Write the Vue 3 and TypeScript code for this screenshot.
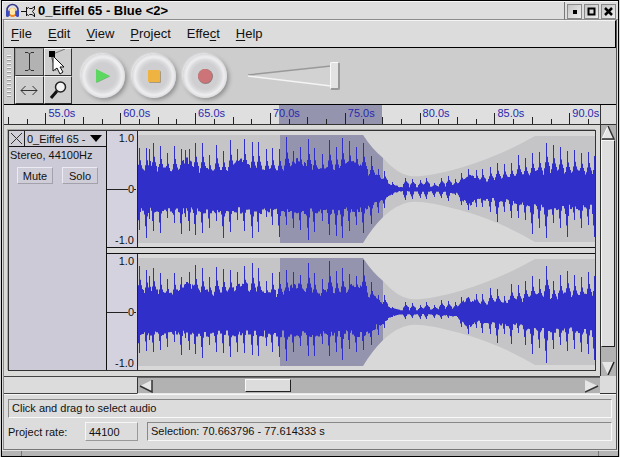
<script setup lang="ts">
import { ref } from 'vue'

type Beat = [x: number, top1: number, bottom1: number, top2: number, bottom2: number]

interface Column {
  top: number
  bottom: number
}

const menus = [
  { before: '', key: 'F', after: 'ile' },
  { before: '', key: 'E', after: 'dit' },
  { before: '', key: 'V', after: 'iew' },
  { before: '', key: 'P', after: 'roject' },
  { before: 'Effe', key: 'c', after: 't' },
  { before: '', key: 'H', after: 'elp' },
]

const rate = ref('44100')
const volume = ref(100)

// Ruler: one grid column for each tick, a label at every fourth one.
const ticks = Array.from({ length: 32 }, (_, i) => ({
  id: i,
  kind: i % 4 === 2 ? 'major' : i % 4 === 0 ? 'half' : 'minor',
}))
const labels = Array.from({ length: 8 }, (_, i) => ({
  text: `${55 + i * 5}.0s`,
  column: `${3 + i * 4} / span ${i === 7 ? 2 : 4}`,
}))
const selection = { left: (275 / 596) * 100, width: (103 / 596) * 100 }

// Peaks of each beat, in units above and below the zero line of both channels.
const beats: Beat[] = [
  [1, 41, 41, 46, 41], [8, 41, 49, 42, 39], [11, 40, 30, 36, 28], [15, 46, 42, 44, 40],
  [22, 43, 44, 39, 38], [29, 36, 29, 33, 35], [36, 43, 34, 39, 30], [43, 40, 45, 35, 43],
  [47, 39, 28, 28, 26], [51, 40, 42, 40, 38], [57, 46, 46, 47, 42], [64, 46, 44, 44, 46],
  [71, 34, 39, 35, 33], [78, 44, 32, 45, 40], [85, 38, 49, 43, 41], [92, 49, 43, 42, 45],
  [99, 40, 31, 40, 40], [106, 50, 42, 46, 41], [114, 47, 49, 49, 43], [120, 47, 43, 44, 44],
  [128, 40, 28, 31, 34], [134, 41, 36, 39, 40], [141, 40, 48, 40, 45], [148, 52, 36, 42, 49],
  [155, 38, 39, 40, 40], [162, 42, 41, 37, 34], [170, 50, 51, 49, 44], [176, 41, 43, 39, 44],
  [184, 35, 32, 33, 32], [191, 49, 46, 51, 44], [198, 42, 47, 41, 40], [204, 51, 49, 44, 48],
  [211, 48, 42, 38, 37], [218, 42, 36, 36, 40], [225, 46, 44, 52, 38], [233, 33, 35, 30, 33],
  [240, 20, 24, 17, 23], [246, 18, 19, 17, 16], [254, 7, 6, 5, 5], [267, 11, 11, 10, 7],
  [274, 10, 10, 9, 6], [282, 9, 9, 7, 7], [288, 11, 10, 10, 7], [296, 6, 8, 7, 6],
  [303, 11, 9, 12, 7], [310, 13, 12, 11, 6], [317, 10, 6, 10, 4], [323, 16, 16, 15, 15],
  [330, 20, 21, 15, 22], [338, 19, 18, 18, 16], [344, 20, 18, 18, 21], [352, 22, 23, 24, 22],
  [359, 26, 33, 23, 31], [366, 25, 23, 16, 22], [373, 26, 29, 28, 32], [380, 34, 29, 27, 21],
  [387, 31, 31, 31, 33], [394, 36, 45, 36, 42], [401, 37, 39, 33, 36], [408, 46, 49, 46, 51],
  [415, 44, 34, 31, 37], [422, 42, 39, 37, 33], [429, 38, 48, 41, 39], [436, 39, 31, 37, 37],
  [443, 36, 39, 35, 40], [450, 37, 36, 40, 42], [456, 33, 48, 36, 48],
]

const gainPoints: [number, number][] = [
  [0, 1], [225, 1], [233, 0.8], [240, 0.62], [246, 0.42], [254, 0.2], [262, 0.1], [300, 0.12],
  [318, 0.2], [324, 0.5], [330, 0.72], [340, 0.45], [355, 0.5], [385, 0.65], [400, 0.85], [457, 0.85],
]

// How much of a beat's peak the columns beside it reach.
const topShape: Record<number, number> = { [-2]: 0.45, [-1]: 0.58, 0: 1, 1: 0.7, 2: 0.58, 3: 0.5 }
const bottomShape: Record<number, number> = { [-2]: 0.52, [-1]: 0.76, 0: 1, 1: 0.56 }

function gain(x: number): number {
  for (let i = 1; i < gainPoints.length; i++) {
    const [x0, g0] = gainPoints[i - 1]
    const [x1, g1] = gainPoints[i]
    if (x <= x1) return g0 + ((g1 - g0) * (x - x0)) / (x1 - x0)
  }
  return 1
}

function noise(n: number): number {
  const v = Math.sin(n * 127.1 + 11.7) * 43758.5453
  return v - Math.floor(v)
}

function columns(channel: number): Column[] {
  return Array.from({ length: 457 }, (_, x) => {
    const g = gain(x)
    const swell = x < 240 ? 9 * Math.max(0, Math.sin((x - 34) / 8.9)) ** 2 : 0
    const seed = Math.floor(x / 2) + channel * 600
    let top = g * (15 + swell + 8 * noise(seed))
    let bottom = g * (18 + 7 * noise(seed + 2000))
    for (const beat of beats) {
      const d = x - beat[0]
      top = Math.max(top, beat[1 + channel * 2] * (topShape[d] ?? 0))
      bottom = Math.max(bottom, beat[2 + channel * 2] * (bottomShape[d] ?? 0))
    }
    return { top, bottom }
  })
}

function wavePath(channel: number): string {
  const cols = columns(channel)
  const upper = cols.map((c, x) => `V${(54 - c.top).toFixed(1)}H${x + 1}`).join('')
  const lower = cols
    .map((c, x) => `V${(54 + c.bottom).toFixed(1)}H${x}`)
    .reverse()
    .join('')
  return `M0 54H0${upper}V54${lower}Z`
}

const channels = [
  { id: 'left', path: wavePath(0) },
  { id: 'right', path: wavePath(1) },
]

const envelope =
  'M0 0H225Q234 14 245 23Q259 39 272 41Q286 43 322 33Q362 21 397 1H457V107H397Q362 86 322 75Q286 65 272 67Q259 69 245 82Q234 93 225 108H0Z'
</script>

<template>
  <div class="window">
    <header class="titlebar">
      <svg class="logo" width="15" height="15" viewBox="0 0 15 15" aria-hidden="true">
        <ellipse cx="7.500" cy="9.500" rx="4" ry="4.500" fill="#f08a1c" />
        <ellipse cx="7.500" cy="8.500" rx="3" ry="3.500" fill="#ffe9a8" />
        <path d="M2 9V7a5.500 5.500 0 0 1 11 0v2" fill="none" stroke="#34348a" stroke-width="1.500" />
        <rect x="1" y="7" width="3" height="7" rx="1.500" fill="#3a4bc0" />
        <rect x="11" y="7" width="3" height="7" rx="1.500" fill="#3a4bc0" />
        <path d="M4.500 8v5M10.500 8v5" stroke="#e0481c" />
      </svg>
      <svg class="pin" width="15" height="12" viewBox="0 0 15 12" aria-hidden="true">
        <path d="M0 6.500h5M5.500 2v9M5.500 4l2-1.500 1 1h2.500l2.500-2M5.500 9l2 1.500 1-1h2.500l2.500 2M13.500 1v3l-2 2.500 2 2.500v3" fill="none" stroke="#111" />
      </svg>
      <h1>0_Eiffel 65 - Blue &lt;2&gt;</h1>
      <div class="winbuttons">
        <button type="button" aria-label="Minimize">
          <svg width="11" height="11" viewBox="0 0 11 11"><rect x="4" y="4" width="4" height="4" /></svg>
        </button>
        <button type="button" aria-label="Maximize">
          <svg width="11" height="11" viewBox="0 0 11 11"><rect x="2.500" y="2.500" width="6" height="6" fill="none" stroke="#000" stroke-width="2" /></svg>
        </button>
        <button type="button" aria-label="Close">
          <svg width="11" height="11" viewBox="0 0 11 11"><path d="M2 2l7 7M9 2l-7 7" stroke="#000" stroke-width="2.500" /></svg>
        </button>
      </div>
    </header>

    <div class="client">
      <nav class="menubar">
        <button v-for="m in menus" :key="m.key" type="button">{{ m.before }}<u>{{ m.key }}</u>{{ m.after }}</button>
      </nav>

      <section class="toolbar">
        <div class="grip"></div>
        <div class="tools">
          <button type="button" class="on" aria-label="Selection tool">
            <svg width="26" height="26" viewBox="0 0 26 26"><path d="M9 3.500h3l1.500 1.500L15 3.500h3M13.500 5v15M9 21.500h3l1.500-1.500 1.500 1.500h3" fill="none" stroke="#333" /></svg>
          </button>
          <button type="button" aria-label="Envelope tool">
            <svg width="26" height="26" viewBox="0 0 26 26">
              <path d="M8 5L20 0M6 7l5 15" stroke="#777" />
              <rect x="4" y="2" width="6" height="6" />
              <path d="M8 7v15l4-3 3 6 3-2-3-5h4z" fill="#fff" stroke="#111" />
            </svg>
          </button>
          <button type="button" aria-label="Time shift tool">
            <svg width="26" height="26" viewBox="0 0 26 26"><path d="M5 13.500h16M9.500 9L5 13.500 9.500 18M16.500 9l4.500 4.500-4.500 4.500" fill="none" stroke="#333" /></svg>
          </button>
          <button type="button" aria-label="Zoom tool">
            <svg width="26" height="26" viewBox="0 0 26 26">
              <path d="M12 14l-6 7" stroke="#111" stroke-width="3" />
              <circle cx="15.500" cy="10" r="5" fill="#f4f4f4" stroke="#222" stroke-width="1.500" />
            </svg>
          </button>
        </div>
        <div class="transport">
          <button type="button" aria-label="Play">
            <svg width="16" height="16" viewBox="0 0 16 16"><path d="M1.500 2L15 8.500 1.500 15z" fill="#8a9a8c" /><path d="M1 1l14 7L1 14.500z" fill="#5cd860" /></svg>
          </button>
          <button type="button" aria-label="Stop">
            <svg width="16" height="16" viewBox="0 0 16 16"><rect x="3" y="3" width="12" height="12" rx="1" fill="#a89a80" /><rect x="2" y="2" width="12" height="12" rx="1" fill="#efb342" /></svg>
          </button>
          <button type="button" aria-label="Record">
            <svg width="16" height="16" viewBox="0 0 16 16"><circle cx="8.500" cy="8.500" r="7.500" fill="#93787a" /><circle cx="8" cy="8" r="7" fill="#cc7478" /></svg>
          </button>
        </div>
        <label class="volume">
          <svg width="94" height="32" viewBox="0 0 94 32" aria-hidden="true">
            <path d="M2 15.500L85 6V26z" fill="#d2d2d2" />
            <path d="M2 15L85 6" stroke="#999" stroke-width="1.500" />
            <path d="M2 16L85 26" stroke="#f4f4f4" stroke-width="1.500" />
          </svg>
          <input v-model="volume" type="range" min="0" max="100" aria-label="Volume" />
        </label>
      </section>

      <section class="workspace">
        <div class="ruler">
          <div class="ruler-selection" :style="{ left: selection.left + '%', width: selection.width + '%' }"></div>
          <span v-for="l in labels" :key="l.text" class="label" :style="{ gridColumn: l.column }">{{ l.text }}</span>
          <i v-for="t in ticks" :key="t.id" :class="['tick', t.kind]"></i>
        </div>
        <div class="ruler-end"></div>

        <div class="tracks">
          <article class="track">
            <aside class="panel">
              <div class="track-head">
                <button type="button" class="close" aria-label="Remove track">
                  <svg width="15" height="15" viewBox="0 0 15 15"><path d="M2 2l11 11M13 2L2 13" stroke="#333" /></svg>
                </button>
                <button type="button" class="name">
                  <span>0_Eiffel 65 -</span>
                  <svg width="12" height="7" viewBox="0 0 12 7" aria-hidden="true"><path d="M0 0h12L6 7z" /></svg>
                </button>
              </div>
              <p>Stereo, 44100Hz</p>
              <div class="switches">
                <button type="button">Mute</button>
                <button type="button">Solo</button>
              </div>
            </aside>
            <div class="channels">
              <div v-for="c in channels" :key="c.id" class="channel">
                <div class="scale">
                  <span>1.0</span>
                  <span class="zero">0</span>
                  <span>-1.0</span>
                </div>
                <div class="wave">
                  <svg viewBox="0 0 457 108" preserveAspectRatio="none" role="img" aria-label="Waveform">
                    <defs>
                      <clipPath :id="'env-' + c.id"><path :d="envelope" /></clipPath>
                    </defs>
                    <path :d="envelope" fill="#c5c4c6" />
                    <rect x="142" y="0" width="103" height="108" fill="#9494ae" :clip-path="`url(#env-${c.id})`" />
                    <path :d="c.path" fill="#302fca" />
                  </svg>
                </div>
              </div>
            </div>
          </article>
        </div>

        <div class="vscroll">
          <button type="button" aria-label="Scroll up">
            <svg width="14" height="14" viewBox="0 0 14 14"><path d="M7 0L13 13H1z" fill="#e6e6e6" /><path d="M7 0L1 13" stroke="#fff" /><path d="M7 0l6 13H1" fill="none" stroke="#333" stroke-width="1.500" /></svg>
          </button>
          <div class="vthumb"></div>
          <div class="vtrough"></div>
          <button type="button" aria-label="Scroll down">
            <svg width="14" height="14" viewBox="0 0 14 14"><path d="M1 1h12L7 14z" fill="#e6e6e6" /><path d="M13 1L7 14" stroke="#222" stroke-width="1.500" /></svg>
          </button>
        </div>

        <div class="hscroll-row">
          <div class="hblank"></div>
          <div class="hscroll">
            <button type="button" aria-label="Scroll left">
              <svg width="14" height="14" viewBox="0 0 14 14"><path d="M13 1v12L1 7z" fill="#e6e6e6" /><path d="M1 7l12 6V1" fill="none" stroke="#333" stroke-width="1.500" /></svg>
            </button>
            <div class="before"></div>
            <div class="hthumb"></div>
            <div class="after"></div>
            <button type="button" aria-label="Scroll right">
              <svg width="14" height="14" viewBox="0 0 14 14"><path d="M0 1v12l13-6z" fill="#e6e6e6" /><path d="M0 13l13-6" stroke="#333" stroke-width="1.500" /></svg>
            </button>
          </div>
        </div>
        <div class="corner"></div>
      </section>

      <footer class="status">
        <div class="sunken">Click and drag to select audio</div>
        <div class="status-row">
          <label for="rate">Project rate:</label>
          <input id="rate" v-model="rate" type="text" />
          <div class="sunken">Selection: 70.663796 - 77.614333 s</div>
        </div>
      </footer>
    </div>
    <div class="handle"><i></i></div>
  </div>
</template>

<style>
body {
  background: #d4d4d4;
}
</style>

<style scoped>
* {
  box-sizing: border-box;
}

button,
input {
  margin: 0;
  padding: 0;
  border: 0;
  border-radius: 0;
  background: none;
  color: inherit;
  font: inherit;
}

svg {
  display: block;
}

.window {
  display: flex;
  flex-direction: column;
  min-height: 100vh;
  margin: 0 1px;
  border: 1px solid #000;
  background: #dcdcdc;
  color: #111;
  font: 11px/14px 'Liberation Sans', Arial, sans-serif;
}

.titlebar {
  display: flex;
  align-items: center;
  height: 19px;
  padding-left: 2px;
  border-top: 1px solid #f6f6f6;
  border-left: 1px solid #f0f0f0;
  border-bottom: 1px solid #8c8c8c;
  background: #dedede;
}

.pin {
  margin: 0 2px 0 1px;
}

h1 {
  flex: 1;
  margin: 0;
  color: #000;
  font-size: 13px;
  font-weight: bold;
  line-height: 16px;
}

.winbuttons {
  display: flex;
  gap: 2px;
  height: 18px;
  padding: 2px 2px 1px;
  border-left: 1px solid #777;
}

.winbuttons button {
  width: 15px;
  height: 15px;
  padding: 1px;
  border: 1px solid #8a8a8a;
  background: linear-gradient(135deg, #c4c4c4, #f0f0f0);
}

.client {
  display: flex;
  flex: 1;
  flex-direction: column;
  margin: 0 1px;
  border-right: 1px solid #555;
  border-left: 1px solid #8c8c8c;
  border-bottom: 1px solid #777;
}

.menubar {
  display: flex;
  gap: 16px;
  height: 28px;
  padding: 0 7px;
  border-top: 1px solid #f4f4f4;
  border-right: 1px solid #000;
  border-bottom: 1px solid #000;
  background: #dcdcdc;
  font-size: 13px;
  line-height: 24px;
}

.menubar u {
  text-underline-offset: 2px;
}

.toolbar {
  display: flex;
  height: 57px;
  border-bottom: 1px solid #000;
  background: #cdcdcd;
}

.grip {
  width: 4px;
  margin: 7px 3px 7px 3px;
  background: repeating-linear-gradient(#f4f4f4 0 1px, #9a9a9a 1px 2px, #cdcdcd 2px 4px);
}

.tools {
  display: grid;
  grid-template-columns: 29px 28px;
  grid-template-rows: 28px 28px;
  border-left: 1px solid #333;
}

.tools button {
  border-top: 1px solid #f2f2f2;
  border-left: 1px solid #f2f2f2;
  border-right: 1px solid #333;
  border-bottom: 1px solid #333;
  background: #cecece;
}

.tools .on {
  border-top-color: #999;
  border-left-color: #999;
  background: #b2b2b2;
}

.transport {
  display: flex;
  align-items: center;
  gap: 7px;
  margin-left: 9px;
}

.transport button {
  display: grid;
  place-items: center;
  width: 44px;
  height: 44px;
  border-radius: 50%;
  background: radial-gradient(circle, #cfcfd1 0 13px, #dadadc 16px, #eeeef0 19px, #dcdcde 22px);
  box-shadow: -1px -1px 2px #ececee, 2px 2px 4px #8e8e90;
}

.volume {
  display: grid;
  align-items: center;
  margin-left: 19px;
}

.volume > * {
  grid-area: 1 / 1;
}

.volume input {
  width: 94px;
  height: 28px;
  appearance: none;
}

.volume input::-webkit-slider-thumb {
  width: 10px;
  height: 28px;
  border: 1px solid #f8f8f8;
  border-right: 2px solid #999;
  border-bottom: 2px solid #999;
  border-radius: 2px;
  background: #e2e2e2;
  appearance: none;
}

.workspace {
  display: grid;
  flex: 1;
  grid-template-columns: minmax(0, 1fr) 16px;
  grid-template-rows: 20px minmax(0, 1fr) 18px;
}

.ruler {
  position: relative;
  display: grid;
  grid-template-columns: repeat(31, 187fr) 120fr;
  grid-template-rows: 12px 7px;
  padding-left: 4px;
  border-bottom: 1px solid #333;
  background: #dfdfdf;
}

.ruler-selection {
  position: absolute;
  top: 0;
  bottom: 0;
  background: #9494ae;
}

.label {
  position: relative;
  grid-row: 1;
  padding: 1px 0 0 3px;
  color: #2828b0;
  white-space: nowrap;
}

.tick {
  position: relative;
  grid-row: 2;
  align-self: end;
  height: 5px;
  border-left: 1px solid #222;
}

.tick.half {
  height: 7px;
}

.tick.major {
  height: 11px;
}

.ruler-end {
  border-left: 1px solid #333;
  border-bottom: 1px solid #333;
  background: #dcdcdc;
}

.tracks {
  padding: 5px 4px;
  background: #dadad8;
}

.track {
  display: grid;
  grid-template-columns: 98px minmax(0, 1fr);
  border: 1px solid #333;
  box-shadow: -1px -1px #a8a8a8;
}

.panel {
  border-right: 1px solid #111;
  background: #cccad6;
}

.track-head {
  display: flex;
  height: 16px;
  border-bottom: 1px solid #111;
  background: #d0ced6;
}

.close {
  width: 16px;
  border-right: 1px solid #222;
}

.name {
  display: flex;
  flex: 1;
  align-items: center;
  gap: 4px;
  padding-left: 2px;
}

.panel p {
  margin: 1px 0 5px 1px;
}

.switches {
  display: flex;
  gap: 9px;
  padding: 0 8px;
}

.switches button {
  width: 36px;
  height: 17px;
  border: 1px solid;
  border-color: #eceaf2 #a3a1ac #a3a1ac #eceaf2;
  background: #cfcdd8;
}

.channels {
  display: grid;
  gap: 5px;
  background: #d8d8d8;
}

.channel {
  display: grid;
  grid-template-columns: 31px minmax(0, 1fr);
}

.channel:first-child {
  border-bottom: 1px solid #111;
}

.channel:last-child {
  border-top: 1px solid #111;
}

.scale {
  display: flex;
  flex-direction: column;
  align-items: flex-end;
  justify-content: space-between;
  padding-right: 3px;
  border-right: 1px solid #222;
  background: #d4d2de;
}

.zero {
  display: flex;
  align-items: center;
  align-self: stretch;
  margin-right: -2px;
}

.zero::before,
.zero::after {
  width: 2px;
  height: 1px;
  background: #222;
  content: '';
}

.zero::before {
  flex: 1;
}

.wave {
  padding: 4px 0;
  background: #d8d8d8;
}

.wave svg {
  width: 100%;
  height: 108px;
}

.vscroll {
  display: flex;
  flex-direction: column;
  align-items: stretch;
  padding: 1px 1px 1px 0;
  border-left: 1px solid #333;
  background: #b2b2b2;
}

.vthumb {
  flex: 206;
  border: 1px solid #f8f8f8;
  border-right: 1px solid #222;
  border-bottom: 1px solid #222;
  background: #dedede;
}

.vtrough {
  flex: 14;
}

.hscroll-row {
  display: flex;
  border-top: 1px solid #444;
}

.hblank {
  width: 133px;
  border-bottom: 1px solid #444;
  background: #dcdcdc;
}

.hscroll {
  display: flex;
  flex: 1;
  padding: 1px;
  border-top: 1px solid #666;
  border-left: 1px solid #333;
  border-bottom: 1px solid #e8e8e8;
  background: #b2b2b2;
}

.before {
  flex: 93;
}

.hthumb {
  flex: 44;
  border: 1px solid #f8f8f8;
  border-right: 1px solid #222;
  border-bottom: 1px solid #222;
  background: #dcdcdc;
}

.after {
  flex: 296;
}

.corner {
  border-bottom: 1px solid #333;
  background: #dcdcdc;
}

.status {
  display: grid;
  gap: 4px;
  padding: 4px 4px 8px;
  border-top: 1px solid #f6f6f6;
}

.status-row {
  display: grid;
  grid-template-columns: 77px 53px minmax(0, 1fr);
  align-items: center;
}

.status-row .sunken {
  margin-left: 9px;
}

.sunken {
  height: 19px;
  padding: 1px 3px;
  border: 1px solid;
  border-color: #888 #f8f8f8 #f8f8f8 #888;
  line-height: 15px;
}

#rate {
  width: 100%;
  height: 19px;
  padding: 0 3px;
  border: 1px solid;
  border-color: #f6f6f6 #999 #999 #f6f6f6;
  background: #dcdcdc;
}

.handle {
  display: flex;
  justify-content: flex-end;
  height: 6px;
  padding: 0 19px;
  border-top: 1px solid #e0e0e0;
  background: #b4b4b4;
}

.handle i,
.handle::before {
  width: 1px;
  background: #777;
  content: '';
}

.handle::before {
  margin-right: auto;
}
</style>
